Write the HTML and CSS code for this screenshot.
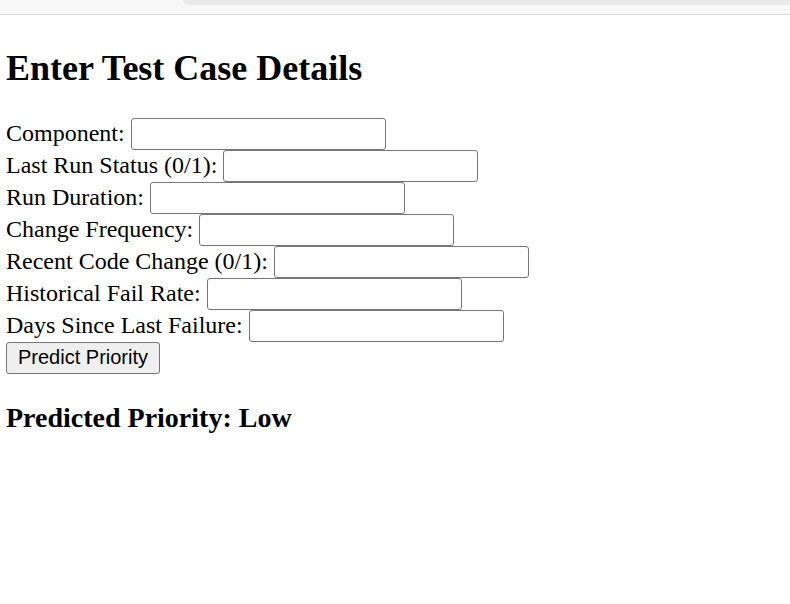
FILE: index.html
```html
<!DOCTYPE html>
<html lang="en">
<head>
<meta charset="utf-8">
<title>Test Case Priority</title>
<link rel="stylesheet" href="styles.css">
</head>
<body>
<div class="chrome"><div class="tab"></div></div>
<main class="page">
  <h2 class="title">Enter Test Case Details</h2>
  <form class="form">
    <div class="row"><label for="component">Component:</label><input id="component" type="text"></div>
    <div class="row"><label for="status">Last Run Status (0/1):</label><input id="status" type="text"></div>
    <div class="row"><label for="duration">Run Duration:</label><input id="duration" type="text"></div>
    <div class="row"><label for="freq">Change Frequency:</label><input id="freq" type="text"></div>
    <div class="row"><label for="recent">Recent Code Change (0/1):</label><input id="recent" type="text"></div>
    <div class="row"><label for="failrate">Historical Fail Rate:</label><input id="failrate" type="text"></div>
    <div class="row"><label for="days">Days Since Last Failure:</label><input id="days" type="text"></div>
    <div class="row"><button type="button" class="btn">Predict Priority</button></div>
  </form>
  <h3 class="result">Predicted Priority: Low</h3>
</main>
</body>
</html>
```

FILE: styles.css
```css
html, body {
  margin: 0;
  padding: 0;
  background: #ffffff;
}

body {
  font-family: "Liberation Serif", "Times New Roman", serif;
  color: #000;
}

.chrome {
  height: 14px;
  background: #f8f8f8;
  border-bottom: 1px solid #dcdcdc;
  display: flex;
}

.tab {
  margin-left: 183px;
  flex: 1;
  height: 5px;
  background: #e8e9e8;
  border-bottom-left-radius: 8px;
}

.page {
  padding: 0 6px;
}

.title {
  font-size: 36px;
  font-weight: bold;
  margin: 0;
  padding-top: 33px;
  line-height: 41px;
  margin-bottom: 29px;
}

.form {
  font-size: 24px;
  margin: 0;
}

.row {
  display: flex;
  align-items: center;
  gap: 6px;
  height: 32px;
}

.row label {
  line-height: 27px;
  padding-bottom: 2px;
}

.row input {
  box-sizing: border-box;
  width: 255px;
  height: 32px;
  border: 1px solid #767676;
  border-radius: 3px;
  padding: 1px 3px;
  font: 20px "Liberation Sans", Arial, sans-serif;
  background: #fff;
  margin: 0;
}

.btn {
  box-sizing: border-box;
  width: 154px;
  height: 32px;
  font: 20px "Liberation Sans", Arial, sans-serif;
  color: #000;
  background: #efefef;
  border: 1px solid #767676;
  border-radius: 3px;
  padding: 0 8px 2px;
  margin: 0;
}

.result {
  font-size: 28px;
  font-weight: bold;
  margin: 28px 0 0;
  line-height: 32px;
}
```
